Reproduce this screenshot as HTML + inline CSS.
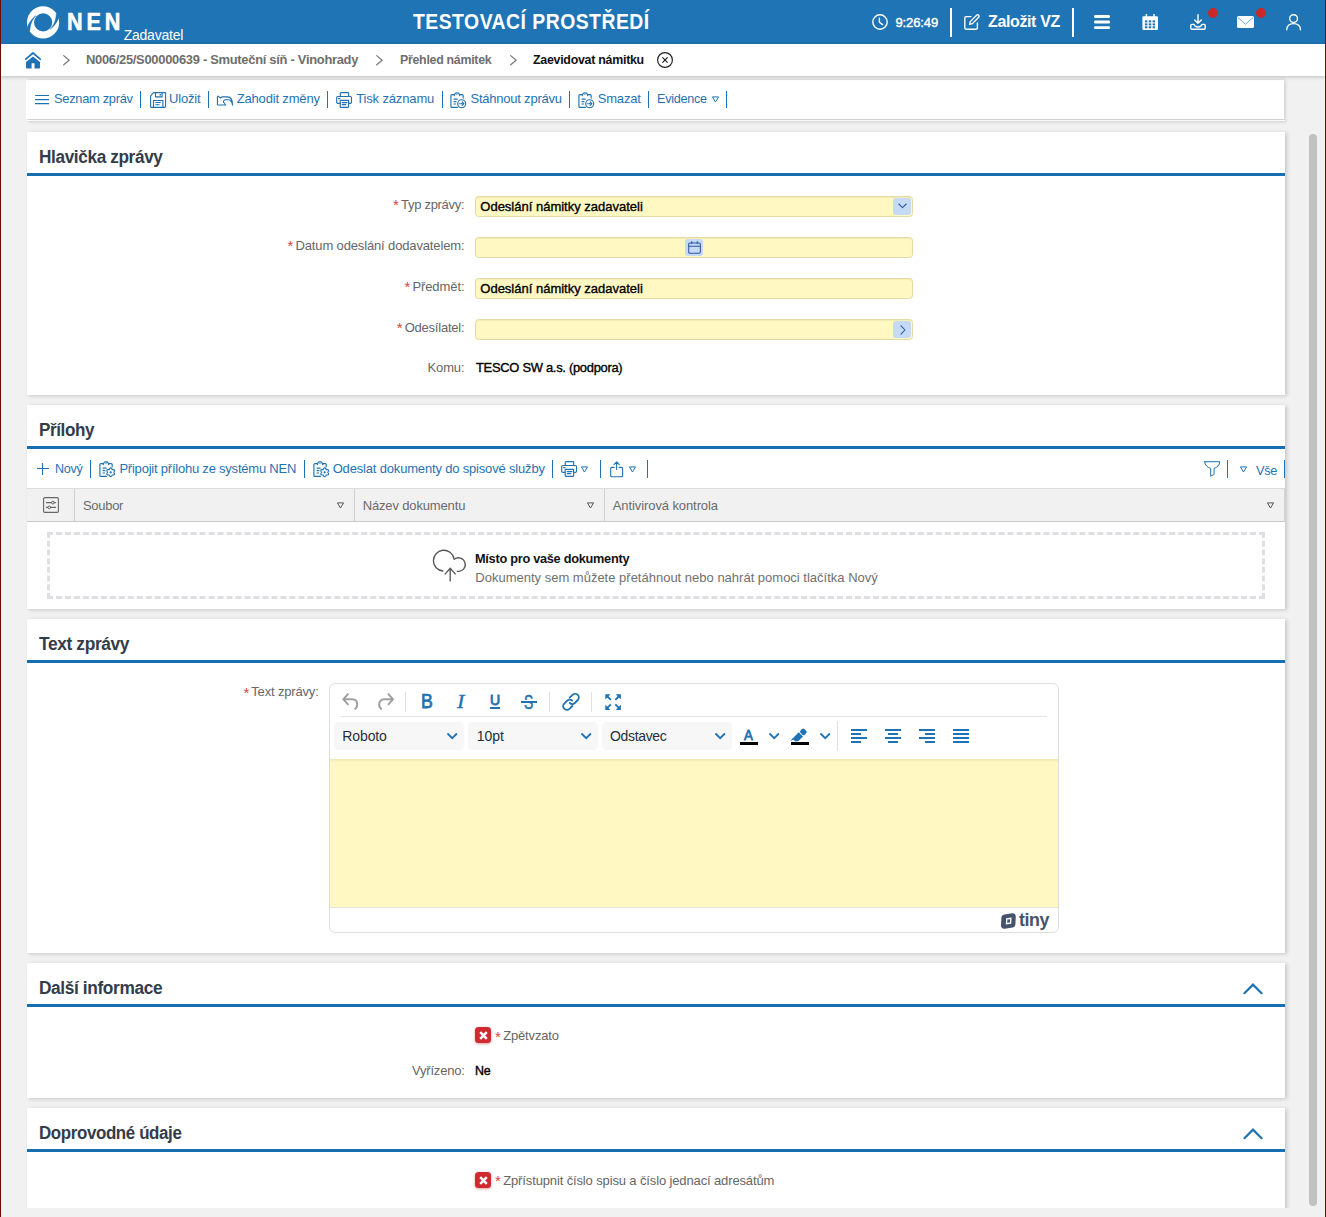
<!DOCTYPE html>
<html lang="cs">
<head>
<meta charset="utf-8">
<title>NEN – Zaevidovat námitku</title>
<style>
*{box-sizing:border-box;margin:0;padding:0}
html,body{width:1326px;height:1217px;overflow:hidden;background:#fff}
body{font-family:"Liberation Sans",sans-serif;font-size:13px;color:#666;position:relative}
#app{position:absolute;left:0;top:0;width:1326px;height:1217px;overflow:hidden;background:#fff}
.frame{position:absolute;top:0;width:1px;height:1217px;background:#6a0d02;z-index:50}
.t{position:absolute;white-space:pre;display:block;font-weight:400}
h1.t,h2.t{font-weight:700}
.abs,svg.i{position:absolute;display:block}
svg.i{overflow:visible}
header{position:absolute;left:1px;top:0;width:1324px;height:44px;background:#1e74b5}
nav.crumbs{position:absolute;left:1px;top:44px;width:1324px;height:32px;background:#fff;box-shadow:0 1px 4px rgba(0,0,0,.22);z-index:3}
main{position:absolute;left:1px;top:76px;width:1324px;height:1141px;background:#f1f1f1;overflow:hidden}
.view{position:absolute;left:1px;top:0;width:1322px;height:1132px;overflow:hidden}
.bar{position:absolute;background:#fff}
.panel{position:absolute;left:25px;width:1258px;background:#fff;box-shadow:1.5px 1px 4px rgba(0,0,0,.18)}
.panel .rule{position:absolute;left:0;top:41px;width:1258px;height:3px;background:#176eb0}
.sep{position:absolute;width:1.4px;background:#1f72b3}
.hsep{position:absolute;width:2px;background:#fff;top:8px;height:29px}
.dot{position:absolute;width:10px;height:10px;border-radius:50%;background:#c9282d}
.fld{position:absolute;left:448px;width:438px;height:21px;background:#fff8c3;border:1px solid #e2daa6;border-radius:3.5px;box-shadow:inset 0 1px 1px rgba(160,140,40,.10)}
.btn{position:absolute;width:18px;height:17px;border-radius:3px;background:#c4daf5}
.thead{position:absolute;left:0;top:83px;width:1258px;height:34px;background:#f1f1f1;border-top:1px solid #dcdcdc;border-bottom:1px solid #c9c9c9;border-right:1px solid #d4d4d4}
.thead i{position:absolute;top:0;width:1px;height:32px;background:#d0d0d0}
.drop{position:absolute;left:20px;top:127px;width:1218px;height:67px;border:3px dashed #dddfe2}
.ed{position:absolute;left:302px;top:64px;width:730px;height:250px;border:1px solid #dedede;border-radius:6px;background:#fff;overflow:hidden}
.ed .area{position:absolute;left:0;top:75px;width:728px;height:148px;background:#fff8c3;box-shadow:inset 0 3px 3px -2px rgba(120,110,60,.18)}
.ed .hr{position:absolute;left:11px;top:32px;width:706px;height:1px;background:#e3e3e3}
.ed .st{position:absolute;left:0;top:223px;width:728px;height:1px;background:#e3e3e3}
.sel{position:absolute;top:38px;width:130px;height:28px;border-radius:4px;background:#f7f7f7}
.vs{position:absolute;width:1px;background:#e0e0e0}
.chk{position:absolute;width:16px;height:16px;border-radius:3.5px;background:#cf2a30;box-shadow:0 1px 3px rgba(200,40,40,.45)}
.thumb{position:absolute;left:1308px;top:58px;width:8px;height:1072px;border-radius:4px;background:#c1c1c1}
</style>
</head>
<body>
<div id="app">
<div class="frame" style="left:0"></div><div class="frame" style="left:1325px"></div>
<header>
<svg class="i" style="left:26.00px;top:5.50px" width="33" height="33" viewBox="0 0 33 33" ><circle cx="16.05" cy="16.4" r="16.1" fill="#fff"/><circle cx="16.15" cy="16.4" r="9.1" fill="#1e74b5"/><path d="M0.24 21.4C1.6 17.6 4.2 13.2 8.7 9.7L8.4 10.4C5.6 13 3.2 18 2.8 24.9L-0.5 26Z" fill="#1e74b5" stroke="#1e74b5" stroke-width=".5"/><path d="M0.24 21.4C1.6 17.6 4.2 13.2 8.7 9.7L8.4 10.4C5.6 13 3.2 18 2.8 24.9L-0.5 26Z" fill="#1e74b5" stroke="#1e74b5" stroke-width=".5" transform="rotate(180 16.05 16.4)"/></svg>
<strong class="t" style="left:66.30px;top:6.38px;font-size:24px;line-height:31px;font-weight:700;letter-spacing:4.301px;color:#fff;-webkit-text-stroke:0.6px;transform:scaleX(0.9000);transform-origin:0 0;">NEN</strong>
<span class="t" style="left:122.70px;top:26.45px;font-size:14px;line-height:18px;letter-spacing:-0.232px;color:#fff;">Zadavatel</span>
<h1 class="t" style="left:411.80px;top:7.55px;font-size:21.5px;line-height:28px;font-weight:700;letter-spacing:0.552px;color:#fff;transform:scaleX(0.9000);transform-origin:0 0;">TESTOVACÍ PROSTŘEDÍ</h1>
<svg class="i" style="left:870.80px;top:14.00px" width="16" height="16" viewBox="0 0 16 16" ><circle cx="8" cy="8" r="7.2" fill="none" stroke="#fff" stroke-width="1.4" stroke-linecap="round" stroke-linejoin="round"/><path d="M7.4 4.2V8.2L10.6 10.6" fill="none" stroke="#fff" stroke-width="1.4" stroke-linecap="round" stroke-linejoin="round"/></svg>
<span class="t" style="left:894.50px;top:14.00px;font-size:13px;line-height:17px;letter-spacing:-0.127px;color:#fff;-webkit-text-stroke:0.4px;">9:26:49</span>
<div class="hsep" style="left:949px"></div>
<svg class="i" style="left:963.00px;top:14.00px" width="16.5" height="16" viewBox="0 0 16.5 16" ><path d="M7 2.6H2.2A1.4 1.4 0 0 0 .8 4V13.8A1.4 1.4 0 0 0 2.2 15.2H12A1.4 1.4 0 0 0 13.4 13.8V9" fill="none" stroke="#fff" stroke-width="1.4" stroke-linecap="round" stroke-linejoin="round"/><path d="M12.6 1.2a1.45 1.45 0 0 1 2.1 2.1L8.3 9.7 5.6 10.4 6.3 7.6Z" fill="none" stroke="#fff" stroke-width="1.3" stroke-linecap="round" stroke-linejoin="round"/></svg>
<strong class="t" style="left:987.10px;top:11.26px;font-size:16px;line-height:21px;font-weight:700;letter-spacing:-0.352px;color:#fff;transform:scaleX(0.9975);transform-origin:0 0;">Založit VZ</strong>
<div class="hsep" style="left:1071px"></div>
<svg class="i" style="left:1093.00px;top:15.00px" width="16" height="14.2" viewBox="0 0 16 14.2" ><rect x="0" y="0.1" width="16" height="2.8" rx="1.2" fill="#fff"/><rect x="0" y="5.6" width="16" height="2.8" rx="1.2" fill="#fff"/><rect x="0" y="11.2" width="16" height="2.8" rx="1.2" fill="#fff"/></svg>
<svg class="i" style="left:1140.70px;top:14.00px" width="16.4" height="16" viewBox="0 0 16.4 16" ><path d="M1.6 2.2H14.8A1.2 1.2 0 0 1 16 3.4V14.8A1.2 1.2 0 0 1 14.8 16H1.6A1.2 1.2 0 0 1 .4 14.8V3.4A1.2 1.2 0 0 1 1.6 2.2Z" fill="#fff"/><rect x="3.6" y="0" width="1.5" height="3.6" rx=".5" fill="#fff"/><rect x="11.3" y="0" width="1.5" height="3.6" rx=".5" fill="#fff"/><rect x="4.4" y="1.6" width="1" height="2.4" fill="#1e74b5" opacity=".0"/><g fill="#1e74b5"><rect x="2.9" y="6.4" width="2.5" height="2" /><rect x="6.75" y="6.4" width="2.5" height="2" /><rect x="10.6" y="6.4" width="2.5" height="2" /><rect x="2.9" y="9.4" width="2.5" height="2" /><rect x="6.75" y="9.4" width="2.5" height="2" /><rect x="10.6" y="9.4" width="2.5" height="2" /><rect x="2.9" y="12.3" width="2.5" height="2" /><rect x="6.75" y="12.3" width="2.5" height="2" /><rect x="10.6" y="12.3" width="2.5" height="2" /></g></svg>
<svg class="i" style="left:1188.80px;top:14.00px" width="16" height="16" viewBox="0 0 16 16" ><path d="M8 .7V9M4.7 5.9 8 9.2 11.3 5.9" fill="none" stroke="#fff" stroke-width="1.4" stroke-linecap="round" stroke-linejoin="round"/><path d="M4 10.4H2A1.2 1.2 0 0 0 .8 11.6V14A1.2 1.2 0 0 0 2 15.2H14A1.2 1.2 0 0 0 15.2 14V11.6A1.2 1.2 0 0 0 14 10.4H12C11.6 12 10 13 8 13S4.4 12 4 10.4Z" fill="none" stroke="#fff" stroke-width="1.4" stroke-linecap="round" stroke-linejoin="round"/></svg>
<div class="dot" style="left:1207px;top:8px"></div>
<svg class="i" style="left:1236.00px;top:16.00px" width="17" height="12" viewBox="0 0 17 12" ><rect x="0" y="0" width="17" height="12" rx="1.6" fill="#fff"/><path d="M1 1.6 8.5 8.2 16 1.6" fill="none" stroke="#5b9bd0" stroke-width="0.9"/></svg>
<div class="dot" style="left:1255px;top:8px"></div>
<svg class="i" style="left:1285.00px;top:14.00px" width="15.2" height="16" viewBox="0 0 15.2 16" ><circle cx="7.6" cy="4.6" r="3.9" fill="none" stroke="#fff" stroke-width="1.4" stroke-linecap="round" stroke-linejoin="round"/><path d="M.7 15.8C.9 11.6 3.8 9.6 7.6 9.6S14.3 11.6 14.5 15.8" fill="none" stroke="#fff" stroke-width="1.4" stroke-linecap="round" stroke-linejoin="round"/></svg>
</header>
<nav class="crumbs">
<svg class="i" style="left:23.90px;top:7.60px" width="16.4" height="16.6" viewBox="0 0 16.4 16.6" ><path d="M.8 7.2 8 1 15.2 7.2" fill="none" stroke="#1f72b3" stroke-width="1.7" stroke-linecap="round" stroke-linejoin="round"/><path d="M1 9.9 8 4.4 15 9.9V15.4A1 1 0 0 1 14 16.4H9.5V11.3H6.6V16.4H2A1 1 0 0 1 1 15.4Z" fill="#1f72b3"/></svg>
<svg class="i" style="left:61.90px;top:11.40px" width="7" height="10.4" viewBox="0 0 7 10.4" ><path d="M.7 .6 6.2 5.2 .7 9.8" fill="none" stroke="#777" stroke-width="1.2" stroke-linecap="round" stroke-linejoin="round"/></svg>
<span class="t" style="left:85.20px;top:7.40px;font-size:13px;line-height:17px;font-weight:700;letter-spacing:-0.286px;color:#6e6e6e;transform:scaleX(0.9930);transform-origin:0 0;">N006/25/S00000639 - Smuteční síň - Vinohrady</span>
<svg class="i" style="left:375.00px;top:11.40px" width="7" height="10.4" viewBox="0 0 7 10.4" ><path d="M.7 .6 6.2 5.2 .7 9.8" fill="none" stroke="#777" stroke-width="1.2" stroke-linecap="round" stroke-linejoin="round"/></svg>
<span class="t" style="left:398.70px;top:7.40px;font-size:13px;line-height:17px;font-weight:700;letter-spacing:-0.286px;color:#6e6e6e;transform:scaleX(0.9504);transform-origin:0 0;">Přehled námitek</span>
<svg class="i" style="left:508.80px;top:11.40px" width="7" height="10.4" viewBox="0 0 7 10.4" ><path d="M.7 .6 6.2 5.2 .7 9.8" fill="none" stroke="#777" stroke-width="1.2" stroke-linecap="round" stroke-linejoin="round"/></svg>
<span class="t" style="left:531.50px;top:7.40px;font-size:13px;line-height:17px;font-weight:700;letter-spacing:-0.286px;color:#111;transform:scaleX(0.9545);transform-origin:0 0;">Zaevidovat námitku</span>
<svg class="i" style="left:655.60px;top:8.00px" width="16" height="16" viewBox="0 0 16 16" ><circle cx="8" cy="8" r="7.4" fill="none" stroke="#222" stroke-width="1.15" stroke-linecap="round" stroke-linejoin="round"/><path d="M5.7 5.7 10.3 10.3M10.3 5.7 5.7 10.3" fill="none" stroke="#222" stroke-width="1.15" stroke-linecap="round" stroke-linejoin="round"/></svg>
</nav>
<main>
<div class="view">
<div class="bar" style="left:25px;top:43px;width:1258px;height:2px;border-top:1px solid #dedede;box-shadow:1.5px 1px 3px rgba(0,0,0,.17)"></div>
<div class="bar" style="left:24px;top:4px;width:1258px;height:39px;box-shadow:1.5px 0 3px rgba(0,0,0,.15)">
<svg class="i" style="left:9.00px;top:15.00px" width="14.2" height="9.2" viewBox="0 0 14.2 9.2" ><rect x="0" y="0" width="14.2" height="1.1" rx=".5" fill="#1f72b3"/><rect x="0" y="4.05" width="14.2" height="1.1" rx=".5" fill="#1f72b3"/><rect x="0" y="8.1" width="14.2" height="1.1" rx=".5" fill="#1f72b3"/></svg>
<span class="t" style="left:27.70px;top:10.20px;font-size:13px;line-height:17px;letter-spacing:-0.286px;color:#1f72b3;transform:scaleX(0.9881);transform-origin:0 0;">Seznam zpráv</span>
<div class="sep" style="left:113.8px;top:10.7px;height:17.6px"></div>
<svg class="i" style="left:123.60px;top:12.20px" width="16.2" height="16" viewBox="0 0 16.2 16" ><path d="M3.6 .6H14.8A.8 .8 0 0 1 15.6 1.4V14.6A.8 .8 0 0 1 14.8 15.4H1.4A.8 .8 0 0 1 .6 14.6V3.8Z" fill="none" stroke="#1f72b3" stroke-width="1.1" stroke-linecap="round" stroke-linejoin="round"/><path d="M5.5 .8V4.9H12.1V.8" fill="none" stroke="#1f72b3" stroke-width="1.1" stroke-linecap="round" stroke-linejoin="round"/><path d="M3.5 15.2V8.5H12.9V15.2" fill="none" stroke="#1f72b3" stroke-width="1.1" stroke-linecap="round" stroke-linejoin="round"/><path d="M5.4 10.5H10.8M5.4 12.7H9.6" fill="none" stroke="#1f72b3" stroke-width="1.0" stroke-linecap="butt" stroke-linejoin="round"/><rect x="9.6" y="2" width="1.3" height="1.6" fill="#1f72b3"/></svg>
<span class="t" style="left:143.10px;top:10.20px;font-size:13px;line-height:17px;letter-spacing:-0.209px;color:#1f72b3;">Uložit</span>
<div class="sep" style="left:181.7px;top:10.7px;height:17.6px"></div>
<svg class="i" style="left:191.00px;top:14.50px" width="16.4" height="11" viewBox="0 0 16.4 11" ><path d="M1.3 1.3 3.4 3C4 2.4 4.6 1.9 5.4 1.9H10.6C13.6 1.9 15.6 5 15.6 10.2C15 7 13.6 4.7 11 4.7H8.4C7.4 4.7 6.4 6 6.4 7L8.7 10H.9C.6 10 .4 9.8 .4 9.5V1.8C.4 1.3 .9 1 1.3 1.3Z" fill="none" stroke="#1f72b3" stroke-width="1.1" stroke-linecap="round" stroke-linejoin="round"/></svg>
<span class="t" style="left:210.70px;top:10.20px;font-size:13px;line-height:17px;letter-spacing:-0.164px;color:#1f72b3;">Zahodit změny</span>
<div class="sep" style="left:300.9px;top:10.7px;height:17.6px"></div>
<svg class="i" style="left:310.20px;top:11.90px" width="16.2" height="16" viewBox="0 0 16.2 16" ><path d="M4.3 4.4V1.3A.7 .7 0 0 1 5 .6H12A.7 .7 0 0 1 12.7 1.3V4.4" fill="none" stroke="#1f72b3" stroke-width="1.15" stroke-linecap="round" stroke-linejoin="round"/><path d="M4 11.4H1.8A1.1 1.1 0 0 1 .7 10.3V5.6A1.1 1.1 0 0 1 1.8 4.5H14.4A1.1 1.1 0 0 1 15.5 5.6V10.3A1.1 1.1 0 0 1 14.4 11.4H12.8" fill="none" stroke="#1f72b3" stroke-width="1.15" stroke-linecap="round" stroke-linejoin="round"/><path d="M4.2 8.4H12.6V14.8A.6 .6 0 0 1 12 15.4H4.8A.6 .6 0 0 1 4.2 14.8Z" fill="none" stroke="#1f72b3" stroke-width="1.15" stroke-linecap="round" stroke-linejoin="round"/><path d="M6.2 10.6H11M6.2 12.6H9.8" fill="none" stroke="#1f72b3" stroke-width="1.1" stroke-linecap="round" stroke-linejoin="round"/><path d="M2.6 6.6H4" fill="none" stroke="#1f72b3" stroke-width="1.1" stroke-linecap="round" stroke-linejoin="round"/></svg>
<span class="t" style="left:330.20px;top:10.20px;font-size:13px;line-height:17px;letter-spacing:-0.146px;color:#1f72b3;">Tisk záznamu</span>
<div class="sep" style="left:415.8px;top:10.7px;height:17.6px"></div>
<svg class="i" style="left:424.10px;top:12.00px" width="16.4" height="16.2" viewBox="0 0 16.4 16.2" ><path d="M4.2 2.6H1.9A1 1 0 0 0 .9 3.6V14.4A1 1 0 0 0 1.9 15.4H7.4" fill="none" stroke="#1f72b3" stroke-width="1.15" stroke-linecap="round" stroke-linejoin="round"/><path d="M9.8 2.6H12.2A1 1 0 0 1 13.2 3.6V6" fill="none" stroke="#1f72b3" stroke-width="1.15" stroke-linecap="round" stroke-linejoin="round"/><path d="M4.3 3.6 5 1.6C5.4 .6 8.6 .6 9 1.6L9.7 3.6" fill="none" stroke="#1f72b3" stroke-width="1.15" stroke-linecap="round" stroke-linejoin="round"/><circle cx="7" cy="2.6" r=".6" fill="#1f72b3"/><path d="M3.6 7.2H7.6M3.6 9.6H6.4M3.6 12H6" fill="none" stroke="#1f72b3" stroke-width="1.15" stroke-linecap="butt" stroke-linejoin="round"/><circle cx="11.7" cy="11.7" r="4" fill="none" stroke="#1f72b3" stroke-width="1.1" stroke-linecap="round" stroke-linejoin="round"/><path d="M9.4 11.7H13.6M12.2 10 13.9 11.7 12.2 13.4" fill="none" stroke="#1f72b3" stroke-width="1.1" stroke-linecap="round" stroke-linejoin="round"/></svg>
<span class="t" style="left:444.50px;top:10.20px;font-size:13px;line-height:17px;letter-spacing:-0.227px;color:#1f72b3;">Stáhnout zprávu</span>
<div class="sep" style="left:542.9px;top:10.7px;height:17.6px"></div>
<svg class="i" style="left:551.70px;top:12.00px" width="16.4" height="16.2" viewBox="0 0 16.4 16.2" ><path d="M4.2 2.6H1.9A1 1 0 0 0 .9 3.6V14.4A1 1 0 0 0 1.9 15.4H7.4" fill="none" stroke="#1f72b3" stroke-width="1.15" stroke-linecap="round" stroke-linejoin="round"/><path d="M9.8 2.6H12.2A1 1 0 0 1 13.2 3.6V6" fill="none" stroke="#1f72b3" stroke-width="1.15" stroke-linecap="round" stroke-linejoin="round"/><path d="M4.3 3.6 5 1.6C5.4 .6 8.6 .6 9 1.6L9.7 3.6" fill="none" stroke="#1f72b3" stroke-width="1.15" stroke-linecap="round" stroke-linejoin="round"/><circle cx="7" cy="2.6" r=".6" fill="#1f72b3"/><path d="M3.6 7.2H7.6M3.6 9.6H6.4M3.6 12H6" fill="none" stroke="#1f72b3" stroke-width="1.15" stroke-linecap="butt" stroke-linejoin="round"/><circle cx="11.7" cy="11.7" r="4" fill="none" stroke="#1f72b3" stroke-width="1.1" stroke-linecap="round" stroke-linejoin="round"/><path d="M9.4 11.7H13.6M12.2 10 13.9 11.7 12.2 13.4" fill="none" stroke="#1f72b3" stroke-width="1.1" stroke-linecap="round" stroke-linejoin="round"/></svg>
<span class="t" style="left:571.70px;top:10.20px;font-size:13px;line-height:17px;letter-spacing:-0.161px;color:#1f72b3;">Smazat</span>
<div class="sep" style="left:621.9px;top:10.7px;height:17.6px"></div>
<span class="t" style="left:631.30px;top:10.20px;font-size:13px;line-height:17px;letter-spacing:-0.286px;color:#1f72b3;transform:scaleX(0.9715);transform-origin:0 0;">Evidence</span>
<svg class="i" style="left:685.90px;top:15.80px" width="7.4" height="7" viewBox="0 0 7.4 7" ><path d="M.8 .9H6.6L3.7 5.7Z" fill="none" stroke="#1f72b3" stroke-width="1.0" stroke-linecap="round" stroke-linejoin="miter"/></svg>
<div class="sep" style="left:699.8px;top:10.7px;height:17.6px"></div>
</div>
<section class="panel" style="top:56px;height:263px">
<h2 class="t" style="left:12.30px;top:13.86px;font-size:18px;line-height:23px;font-weight:700;letter-spacing:-0.396px;color:#343c4a;transform:scaleX(0.9565);transform-origin:0 0;">Hlavička zprávy</h2>
<div class="rule"></div>
<span class="t" style="left:366.00px;top:63.00px;font-size:15px;line-height:20px;color:#d2453e;">*</span>
<label class="t" style="left:374.00px;top:63.60px;font-size:13px;line-height:17px;letter-spacing:-0.286px;color:#666666;">Typ zprávy:</label>
<div class="fld" style="top:64px"><div class="btn" style="left:417px;top:1px"></div><svg class="i" style="left:421.50px;top:6.10px" width="9" height="6" viewBox="0 0 9 6" ><path d="M.8 1 4.5 4.6 8.2 1" fill="none" stroke="#2f55a4" stroke-width="1.05" stroke-linecap="round" stroke-linejoin="round"/></svg></div>
<span class="t" style="left:453.30px;top:65.50px;font-size:13px;line-height:17px;color:#000;-webkit-text-stroke:0.35px;">Odeslání námitky zadavateli</span>
<span class="t" style="left:260.50px;top:104.00px;font-size:15px;line-height:20px;color:#d2453e;">*</span>
<label class="t" style="left:268.50px;top:104.60px;font-size:13px;line-height:17px;letter-spacing:-0.140px;color:#666666;">Datum odeslání dodavatelem:</label>
<div class="fld" style="top:105px"><div class="btn" style="left:209px;top:1px"></div><svg class="i" style="left:212.00px;top:3.00px" width="13" height="13" viewBox="0 0 13 13" ><rect x=".7" y="1.9" width="11.6" height="10.4" rx="1.2" fill="none" stroke="#2f55a4" stroke-width="1.05" stroke-linecap="round" stroke-linejoin="round"/><path d="M.9 5.2H12.1M3.8 .6V2.6M9.2 .6V2.6" fill="none" stroke="#2f55a4" stroke-width="1.05" stroke-linecap="round" stroke-linejoin="round"/></svg></div>
<span class="t" style="left:377.40px;top:145.00px;font-size:15px;line-height:20px;color:#d2453e;">*</span>
<label class="t" style="left:385.40px;top:145.60px;font-size:13px;line-height:17px;letter-spacing:-0.083px;color:#666666;">Předmět:</label>
<div class="fld" style="top:146px"></div>
<span class="t" style="left:453.30px;top:147.50px;font-size:13px;line-height:17px;color:#000;-webkit-text-stroke:0.35px;">Odeslání námitky zadavateli</span>
<span class="t" style="left:369.70px;top:186.00px;font-size:15px;line-height:20px;color:#d2453e;">*</span>
<label class="t" style="left:377.70px;top:186.60px;font-size:13px;line-height:17px;letter-spacing:-0.228px;color:#666666;">Odesílatel:</label>
<div class="fld" style="top:187px"><div class="btn" style="left:417px;top:1px"></div><svg class="i" style="left:423.50px;top:4.50px" width="6" height="10" viewBox="0 0 6 10" ><path d="M1 .8 5 5 1 9.2" fill="none" stroke="#2f55a4" stroke-width="1.05" stroke-linecap="round" stroke-linejoin="round"/></svg></div>
<label class="t" style="left:400.50px;top:226.60px;font-size:13px;line-height:17px;letter-spacing:-0.127px;color:#666666;">Komu:</label>
<span class="t" style="left:448.70px;top:226.60px;font-size:13px;line-height:17px;letter-spacing:-0.286px;color:#000;-webkit-text-stroke:0.35px;transform:scaleX(0.9937);transform-origin:0 0;">TESCO SW a.s. (podpora)</span>
</section>
<section class="panel" style="top:329px;height:204px">
<h2 class="t" style="left:12.30px;top:13.86px;font-size:18px;line-height:23px;font-weight:700;letter-spacing:-0.396px;color:#343c4a;transform:scaleX(0.9468);transform-origin:0 0;">Přílohy</h2>
<div class="rule"></div>
<svg class="i" style="left:10.00px;top:58.00px" width="12" height="12" viewBox="0 0 12 12" ><path d="M5.5 0V12M0 5.5H12" fill="none" stroke="#1f72b3" stroke-width="1.1" stroke-linecap="butt" stroke-linejoin="round"/></svg>
<span class="t" style="left:28.30px;top:55.00px;font-size:13px;line-height:17px;letter-spacing:-0.286px;color:#1f72b3;transform:scaleX(0.9699);transform-origin:0 0;">Nový</span>
<div class="sep" style="left:62.8px;top:55.4px;height:17.4px"></div>
<svg class="i" style="left:72.20px;top:55.60px" width="16.8" height="16.8" viewBox="0 0 16.8 16.8" ><path d="M4.2 2.6H1.9A1 1 0 0 0 .9 3.6V14.4A1 1 0 0 0 1.9 15.4H7.4" fill="none" stroke="#1f72b3" stroke-width="1.15" stroke-linecap="round" stroke-linejoin="round"/><path d="M9.8 2.6H12.2A1 1 0 0 1 13.2 3.6V6" fill="none" stroke="#1f72b3" stroke-width="1.15" stroke-linecap="round" stroke-linejoin="round"/><path d="M4.3 3.6 5 1.6C5.4 .6 8.6 .6 9 1.6L9.7 3.6" fill="none" stroke="#1f72b3" stroke-width="1.15" stroke-linecap="round" stroke-linejoin="round"/><circle cx="7" cy="2.6" r=".6" fill="#1f72b3"/><path d="M3.6 7.2H7.6M3.6 9.6H6.4M3.6 12H6" fill="none" stroke="#1f72b3" stroke-width="1.15" stroke-linecap="butt" stroke-linejoin="round"/><path d="M11.70 6.80L12.71 7.53L13.20 8.70L14.46 8.54L15.60 9.05L15.47 10.29L14.70 11.30L15.47 12.31L15.60 13.55L14.46 14.06L13.20 13.90L12.71 15.07L11.70 15.80L10.69 15.07L10.20 13.90L8.94 14.06L7.80 13.55L7.93 12.31L8.70 11.30L7.93 10.29L7.80 9.05L8.94 8.54L10.20 8.70L10.69 7.53Z" fill="#fff" stroke="#1f72b3" stroke-width="1.05" stroke-linejoin="round"/><circle cx="11.7" cy="11.3" r="1.15" fill="#1f72b3"/></svg>
<span class="t" style="left:92.40px;top:55.00px;font-size:13px;line-height:17px;letter-spacing:-0.220px;color:#1f72b3;">Připojit přílohu ze systému NEN</span>
<div class="sep" style="left:276.8px;top:55.4px;height:17.4px"></div>
<svg class="i" style="left:285.80px;top:55.60px" width="16.8" height="16.8" viewBox="0 0 16.8 16.8" ><path d="M4.2 2.6H1.9A1 1 0 0 0 .9 3.6V14.4A1 1 0 0 0 1.9 15.4H7.4" fill="none" stroke="#1f72b3" stroke-width="1.15" stroke-linecap="round" stroke-linejoin="round"/><path d="M9.8 2.6H12.2A1 1 0 0 1 13.2 3.6V6" fill="none" stroke="#1f72b3" stroke-width="1.15" stroke-linecap="round" stroke-linejoin="round"/><path d="M4.3 3.6 5 1.6C5.4 .6 8.6 .6 9 1.6L9.7 3.6" fill="none" stroke="#1f72b3" stroke-width="1.15" stroke-linecap="round" stroke-linejoin="round"/><circle cx="7" cy="2.6" r=".6" fill="#1f72b3"/><path d="M3.6 7.2H7.6M3.6 9.6H6.4M3.6 12H6" fill="none" stroke="#1f72b3" stroke-width="1.15" stroke-linecap="butt" stroke-linejoin="round"/><path d="M11.70 6.80L12.71 7.53L13.20 8.70L14.46 8.54L15.60 9.05L15.47 10.29L14.70 11.30L15.47 12.31L15.60 13.55L14.46 14.06L13.20 13.90L12.71 15.07L11.70 15.80L10.69 15.07L10.20 13.90L8.94 14.06L7.80 13.55L7.93 12.31L8.70 11.30L7.93 10.29L7.80 9.05L8.94 8.54L10.20 8.70L10.69 7.53Z" fill="#fff" stroke="#1f72b3" stroke-width="1.05" stroke-linejoin="round"/><circle cx="11.7" cy="11.3" r="1.15" fill="#1f72b3"/></svg>
<span class="t" style="left:305.70px;top:55.00px;font-size:13px;line-height:17px;letter-spacing:-0.175px;color:#1f72b3;">Odeslat dokumenty do spisové služby</span>
<div class="sep" style="left:524.8px;top:55.4px;height:17.4px"></div>
<svg class="i" style="left:533.80px;top:56.10px" width="16.2" height="16" viewBox="0 0 16.2 16" ><path d="M4.3 4.4V1.3A.7 .7 0 0 1 5 .6H12A.7 .7 0 0 1 12.7 1.3V4.4" fill="none" stroke="#1f72b3" stroke-width="1.15" stroke-linecap="round" stroke-linejoin="round"/><path d="M4 11.4H1.8A1.1 1.1 0 0 1 .7 10.3V5.6A1.1 1.1 0 0 1 1.8 4.5H14.4A1.1 1.1 0 0 1 15.5 5.6V10.3A1.1 1.1 0 0 1 14.4 11.4H12.8" fill="none" stroke="#1f72b3" stroke-width="1.15" stroke-linecap="round" stroke-linejoin="round"/><path d="M4.2 8.4H12.6V14.8A.6 .6 0 0 1 12 15.4H4.8A.6 .6 0 0 1 4.2 14.8Z" fill="none" stroke="#1f72b3" stroke-width="1.15" stroke-linecap="round" stroke-linejoin="round"/><path d="M6.2 10.6H11M6.2 12.6H9.8" fill="none" stroke="#1f72b3" stroke-width="1.1" stroke-linecap="round" stroke-linejoin="round"/><path d="M2.6 6.6H4" fill="none" stroke="#1f72b3" stroke-width="1.1" stroke-linecap="round" stroke-linejoin="round"/></svg>
<svg class="i" style="left:554.10px;top:60.60px" width="7.4" height="7" viewBox="0 0 7.4 7" ><path d="M.8 .9H6.6L3.7 5.7Z" fill="none" stroke="#1f72b3" stroke-width="1.0" stroke-linecap="round" stroke-linejoin="miter"/></svg>
<div class="sep" style="left:572.7px;top:55.4px;height:17.4px"></div>
<svg class="i" style="left:583.40px;top:55.50px" width="13.4" height="17" viewBox="0 0 13.4 17" ><path d="M4.2 6.4H1.7A1 1 0 0 0 .7 7.4V14.8A1 1 0 0 0 1.7 15.8H11.6A1 1 0 0 0 12.6 14.8V7.4A1 1 0 0 0 11.6 6.4H9.2" fill="none" stroke="#1f72b3" stroke-width="1.1" stroke-linecap="round" stroke-linejoin="round"/><path d="M6.65 8.4V1M4 3.6 6.65 .9 9.3 3.6" fill="none" stroke="#1f72b3" stroke-width="1.1" stroke-linecap="round" stroke-linejoin="round"/></svg>
<svg class="i" style="left:602.00px;top:60.60px" width="7.4" height="7" viewBox="0 0 7.4 7" ><path d="M.8 .9H6.6L3.7 5.7Z" fill="none" stroke="#1f72b3" stroke-width="1.0" stroke-linecap="round" stroke-linejoin="miter"/></svg>
<div class="sep" style="left:620.0px;top:55.4px;height:17.4px"></div>
<svg class="i" style="left:1176.80px;top:56.00px" width="16.4" height="16" viewBox="0 0 16.4 16" ><path d="M.7 .7H15.7C15.7 4.2 13 6.5 10.1 7.4V13.4L6.7 15.2V7.4C3.6 6.5 .7 4.2 .7 .7Z" fill="none" stroke="#1f72b3" stroke-width="1.0" stroke-linecap="round" stroke-linejoin="round"/></svg>
<div class="sep" style="left:1199.8px;top:55.4px;height:17.4px"></div>
<svg class="i" style="left:1213.20px;top:60.60px" width="7.4" height="7" viewBox="0 0 7.4 7" ><path d="M.8 .9H6.6L3.7 5.7Z" fill="none" stroke="#1f72b3" stroke-width="1.0" stroke-linecap="round" stroke-linejoin="miter"/></svg>
<span class="t" style="left:1228.70px;top:57.00px;font-size:13px;line-height:17px;letter-spacing:-0.286px;color:#1f72b3;transform:scaleX(0.9808);transform-origin:0 0;">Vše</span>
<div class="sep" style="left:1256.6px;top:55.4px;height:17.4px"></div>
<div class="thead">
<i style="left:47px"></i><i style="left:327px"></i><i style="left:577px"></i>
<svg class="i" style="left:16.20px;top:7.90px" width="16" height="16" viewBox="0 0 16 16" ><rect x=".6" y=".6" width="14.8" height="14.8" rx="1.1" fill="none" stroke="#676767" stroke-width="1.1" stroke-linecap="round" stroke-linejoin="round"/><path d="M3.4 5.6H8.4M11.4 5.6H12.6M3.4 10.4H4.8M7.8 10.4H12.6" fill="none" stroke="#676767" stroke-width="1.1" stroke-linecap="round" stroke-linejoin="round"/><circle cx="9.9" cy="5.6" r="1.4" fill="none" stroke="#676767" stroke-width="1.0" stroke-linecap="round" stroke-linejoin="round"/><circle cx="6.3" cy="10.4" r="1.4" fill="none" stroke="#676767" stroke-width="1.0" stroke-linecap="round" stroke-linejoin="round"/></svg>
<svg class="i" style="left:310.30px;top:13.00px" width="7.4" height="7" viewBox="0 0 7.4 7" ><path d="M.8 .9H6.6L3.7 5.7Z" fill="none" stroke="#555" stroke-width="1.0" stroke-linecap="round" stroke-linejoin="miter"/></svg>
<svg class="i" style="left:560.20px;top:13.00px" width="7.4" height="7" viewBox="0 0 7.4 7" ><path d="M.8 .9H6.6L3.7 5.7Z" fill="none" stroke="#555" stroke-width="1.0" stroke-linecap="round" stroke-linejoin="miter"/></svg>
<svg class="i" style="left:1239.80px;top:13.00px" width="7.4" height="7" viewBox="0 0 7.4 7" ><path d="M.8 .9H6.6L3.7 5.7Z" fill="none" stroke="#555" stroke-width="1.0" stroke-linecap="round" stroke-linejoin="miter"/></svg>
</div>
<span class="t" style="left:55.90px;top:92.30px;font-size:13px;line-height:17px;letter-spacing:-0.286px;color:#6b6b6b;transform:scaleX(0.9971);transform-origin:0 0;">Soubor</span>
<span class="t" style="left:335.70px;top:92.30px;font-size:13px;line-height:17px;letter-spacing:-0.148px;color:#6b6b6b;">Název dokumentu</span>
<span class="t" style="left:585.80px;top:92.30px;font-size:13px;line-height:17px;letter-spacing:-0.095px;color:#6b6b6b;">Antivirová kontrola</span>
<div class="drop"></div>
<svg class="i" style="left:405.50px;top:144.50px" width="33" height="32.4" viewBox="0 0 33 32.4" ><path d="M21 8.6A10.4 10.4 0 1 0 9.9 21" fill="none" stroke="#585858" stroke-width="1.35" stroke-linecap="round" stroke-linejoin="round"/><path d="M21.2 9.3A6.8 6.8 0 1 1 24.4 21.3" fill="none" stroke="#585858" stroke-width="1.35" stroke-linecap="round" stroke-linejoin="round"/><path d="M17.2 31.6V18.4M11.8 24.4 17.2 18.2 22.7 24.4" fill="none" stroke="#585858" stroke-width="1.35" stroke-linecap="butt" stroke-linejoin="miter"/></svg>
<strong class="t" style="left:448.10px;top:145.20px;font-size:13px;line-height:17px;font-weight:700;letter-spacing:-0.286px;color:#111;transform:scaleX(0.9816);transform-origin:0 0;">Místo pro vaše dokumenty</strong>
<span class="t" style="left:448.30px;top:163.80px;font-size:13px;line-height:17px;color:#707070;">Dokumenty sem můžete přetáhnout nebo nahrát pomoci tlačítka Nový</span>
</section>
<section class="panel" style="top:543px;height:334px">
<h2 class="t" style="left:12.30px;top:13.86px;font-size:18px;line-height:23px;font-weight:700;letter-spacing:-0.396px;color:#343c4a;transform:scaleX(0.9655);transform-origin:0 0;">Text zprávy</h2>
<div class="rule"></div>
<span class="t" style="left:216.50px;top:63.70px;font-size:15px;line-height:20px;color:#d2453e;">*</span>
<label class="t" style="left:224.30px;top:64.30px;font-size:13px;line-height:17px;letter-spacing:-0.172px;color:#666666;">Text zprávy:</label>
<div class="ed">
<div class="hr"></div>
<div class="vs" style="left:75.1px;top:8px;height:20px"></div>
<div class="vs" style="left:218.9px;top:8px;height:20px"></div>
<div class="vs" style="left:261.1px;top:8px;height:20px"></div>
<div class="vs" style="left:507.2px;top:36.5px;height:30px"></div>
<svg class="i" style="left:11.90px;top:8.90px" width="16.4" height="17" viewBox="0 0 16.4 17" ><path d="M6.4 .7 1.4 6.3 6.4 11.9M1.6 6.3H10.2C13.6 6.3 15.2 8.8 15.2 11.6C15.2 13.6 14.2 15.3 12.6 16.3" fill="none" stroke="#a0a0a0" stroke-width="2.0" stroke-linecap="butt" stroke-linejoin="miter"/></svg>
<svg class="i" style="left:47.80px;top:8.90px" width="16.4" height="17" viewBox="0 0 16.4 17" ><path d="M10 .7 15 6.3 10 11.9M14.8 6.3H6.2C2.8 6.3 1.2 8.8 1.2 11.6C1.2 13.6 2.2 15.3 3.8 16.3" fill="none" stroke="#a0a0a0" stroke-width="2.0" stroke-linecap="butt" stroke-linejoin="miter"/></svg>
<svg class="i" style="left:232.00px;top:9.00px" width="18" height="18" viewBox="0 0 18 18" ><path d="M7.6 4.6 10.6 1.8C12 .5 14.4 .5 15.8 1.9S17.2 5.6 15.8 7L12.8 10C11.4 11.4 9.2 11.4 7.8 10" fill="none" stroke="#1f72b3" stroke-width="1.8" stroke-linecap="round" stroke-linejoin="round"/><path d="M10.4 13 7.4 15.8C6 17.1 3.6 17.1 2.2 15.7S.8 12 2.2 10.6L5.2 7.6C6.6 6.2 8.8 6.2 10.2 7.6" fill="none" stroke="#1f72b3" stroke-width="1.8" stroke-linecap="round" stroke-linejoin="round"/></svg>
<svg class="i" style="left:275.00px;top:10.00px" width="16.2" height="16.2" viewBox="0 0 16.2 16.2" ><path d="M0.3 0.3L5.5 0.3L0.3 5.5Z" fill="#1f72b3"/><path d="M1.5 1.5L5.8999999999999995 5.8999999999999995" stroke="#1f72b3" stroke-width="1.8" fill="none"/><path d="M15.9 0.3L10.7 0.3L15.9 5.5Z" fill="#1f72b3"/><path d="M14.700000000000001 1.5L10.3 5.8999999999999995" stroke="#1f72b3" stroke-width="1.8" fill="none"/><path d="M0.3 15.9L5.5 15.9L0.3 10.7Z" fill="#1f72b3"/><path d="M1.5 14.700000000000001L5.8999999999999995 10.3" stroke="#1f72b3" stroke-width="1.8" fill="none"/><path d="M15.9 15.9L10.7 15.9L15.9 10.7Z" fill="#1f72b3"/><path d="M14.700000000000001 14.700000000000001L10.3 10.3" stroke="#1f72b3" stroke-width="1.8" fill="none"/></svg>
<div class="sel" style="left:4px"></div>
<div class="sel" style="left:138px"></div>
<div class="sel" style="left:272px"></div>
<svg class="i" style="left:117.00px;top:49.00px" width="10.4" height="6.6" viewBox="0 0 10.4 6.6" ><path d="M1 1 5.2 5.2 9.4 1" fill="none" stroke="#1f72b3" stroke-width="1.8" stroke-linecap="round" stroke-linejoin="miter"/></svg>
<svg class="i" style="left:251.00px;top:49.00px" width="10.4" height="6.6" viewBox="0 0 10.4 6.6" ><path d="M1 1 5.2 5.2 9.4 1" fill="none" stroke="#1f72b3" stroke-width="1.8" stroke-linecap="round" stroke-linejoin="miter"/></svg>
<svg class="i" style="left:384.50px;top:49.00px" width="10.4" height="6.6" viewBox="0 0 10.4 6.6" ><path d="M1 1 5.2 5.2 9.4 1" fill="none" stroke="#1f72b3" stroke-width="1.8" stroke-linecap="round" stroke-linejoin="miter"/></svg>
<svg class="i" style="left:439.20px;top:49.00px" width="10.4" height="6.6" viewBox="0 0 10.4 6.6" ><path d="M1 1 5.2 5.2 9.4 1" fill="none" stroke="#1f72b3" stroke-width="1.8" stroke-linecap="round" stroke-linejoin="miter"/></svg>
<svg class="i" style="left:490.00px;top:49.00px" width="10.4" height="6.6" viewBox="0 0 10.4 6.6" ><path d="M1 1 5.2 5.2 9.4 1" fill="none" stroke="#1f72b3" stroke-width="1.8" stroke-linecap="round" stroke-linejoin="miter"/></svg>
<div class="abs" style="left:410.2px;top:57.8px;width:17.8px;height:3.2px;background:#000"></div>
<div class="abs" style="left:461.3px;top:57.8px;width:17.8px;height:3.2px;background:#000"></div>
<svg class="i" style="left:461.00px;top:43.50px" width="17" height="14.5" viewBox="0 0 17 14.5" ><g transform="translate(12.7 3.5) rotate(45)" fill="#1f72b3"><rect x="-3" y="-2.2" width="6" height="5.4" rx="1.7"/><path d="M-3 4H3V10.4L1.2 13H-1.2L-3 16Z"/></g></svg>
<svg class="i" style="left:520.60px;top:45.00px" width="16" height="14" viewBox="0 0 16 14" ><rect x="0" y="0" width="16" height="2" rx=".3" fill="#1f72b3"/><rect x="0" y="4" width="10" height="2" rx=".3" fill="#1f72b3"/><rect x="0" y="8" width="16" height="2" rx=".3" fill="#1f72b3"/><rect x="0" y="12" width="10" height="2" rx=".3" fill="#1f72b3"/></svg>
<svg class="i" style="left:555.00px;top:45.00px" width="16" height="14" viewBox="0 0 16 14" ><rect x="0" y="0" width="16" height="2" rx=".3" fill="#1f72b3"/><rect x="3" y="4" width="10" height="2" rx=".3" fill="#1f72b3"/><rect x="0" y="8" width="16" height="2" rx=".3" fill="#1f72b3"/><rect x="3" y="12" width="10" height="2" rx=".3" fill="#1f72b3"/></svg>
<svg class="i" style="left:588.80px;top:45.00px" width="16" height="14" viewBox="0 0 16 14" ><rect x="0" y="0" width="16" height="2" rx=".3" fill="#1f72b3"/><rect x="6" y="4" width="10" height="2" rx=".3" fill="#1f72b3"/><rect x="0" y="8" width="16" height="2" rx=".3" fill="#1f72b3"/><rect x="6" y="12" width="10" height="2" rx=".3" fill="#1f72b3"/></svg>
<svg class="i" style="left:622.80px;top:45.00px" width="16" height="14" viewBox="0 0 16 14" ><rect x="0" y="0" width="16" height="2" rx=".3" fill="#1f72b3"/><rect x="0" y="4" width="16" height="2" rx=".3" fill="#1f72b3"/><rect x="0" y="8" width="16" height="2" rx=".3" fill="#1f72b3"/><rect x="0" y="12" width="16" height="2" rx=".3" fill="#1f72b3"/></svg>
<div class="area"></div><div class="st"></div>
<svg class="i" style="left:670.00px;top:229.00px" width="16.4" height="16" viewBox="0 0 16.4 16" ><path d="M4.4 1.6 12.2 .3C14.2 0 15.9 1.5 15.8 3.5L15.4 11.4C15.3 12.9 14.2 14.1 12.8 14.4L4.6 15.8C2.6 16.1 .9 14.6 1 12.6L1.4 4.6C1.5 3.1 2.6 1.9 4.4 1.6Z" fill="#47536a"/><path d="M6.2 5.2 11.6 4.4 11.2 10.8 5.8 11.6Z" fill="#fff"/><path d="M7.4 6.6 10.2 6.2 10 9.4 7.2 9.8Z" fill="#47536a"/><path d="M4.2 10.4 6.4 10.2 6.2 12.6 4 12.8Z" fill="#fff" opacity=".0"/></svg>
<b class="t" style="left:91.20px;top:5.44px;font-size:19.5px;line-height:25px;color:#1f72b3;-webkit-text-stroke:0.75px;transform:scaleX(0.9094);transform-origin:0 0;">B</b>
<i class="t" style="left:127.01px;top:5.45px;font-size:19.5px;line-height:25px;font-weight:i;color:#1f72b3;font-family:'Liberation Serif',sans-serif;-webkit-text-stroke:0.3px;transform:scaleX(1.1327);transform-origin:0 0;font-style:italic;font-weight:400;font-family:'Liberation Serif',serif;">I</i>
<u class="t" style="left:159.80px;top:6.10px;font-size:15px;line-height:20px;color:#1f72b3;-webkit-text-stroke:0.9px;transform:scaleX(0.9342);transform-origin:0 0;text-decoration:none;">U</u>
<div class="abs" style="left:160.1px;top:23.0px;width:10.1px;height:2px;background:#1f72b3"></div>
<s class="t" style="left:194.30px;top:5.07px;font-size:20px;line-height:26px;color:#1f72b3;-webkit-text-stroke:0.6px;transform:scaleX(0.6916);transform-origin:0 0;text-decoration:none;">S</s>
<div class="abs" style="left:193.0px;top:15.9px;width:12px;height:3.6px;background:#fff"></div>
<div class="abs" style="left:190.9px;top:16.8px;width:16px;height:2px;background:#1f72b3"></div>
<span class="t" style="left:414.10px;top:41.58px;font-size:14.5px;line-height:19px;color:#1f72b3;-webkit-text-stroke:0.8px;transform:scaleX(0.9161);transform-origin:0 0;">A</span>
<span class="t" style="left:12.30px;top:43.45px;font-size:14px;line-height:18px;letter-spacing:-0.108px;color:#222f3e;">Roboto</span>
<span class="t" style="left:146.70px;top:43.45px;font-size:14px;line-height:18px;letter-spacing:0.006px;color:#222f3e;">10pt</span>
<span class="t" style="left:280.30px;top:43.45px;font-size:14px;line-height:18px;letter-spacing:-0.308px;color:#222f3e;transform:scaleX(0.9968);transform-origin:0 0;">Odstavec</span>
<span class="t" style="left:688.70px;top:224.66px;font-size:18px;line-height:23px;font-weight:700;letter-spacing:-0.396px;color:#47536a;transform:scaleX(0.9900);transform-origin:0 0;">tiny</span>
</div>
</section>
<section class="panel" style="top:887px;height:135px">
<h2 class="t" style="left:12.30px;top:13.86px;font-size:18px;line-height:23px;font-weight:700;letter-spacing:-0.396px;color:#343c4a;transform:scaleX(0.9611);transform-origin:0 0;">Další informace</h2>
<div class="rule"></div>
<svg class="i" style="left:1215.50px;top:20.00px" width="20" height="11.6" viewBox="0 0 20 11.6" ><path d="M1.4 10.2 10 1.6 18.6 10.2" fill="none" stroke="#1f72b3" stroke-width="2.2" stroke-linecap="round" stroke-linejoin="miter"/></svg>
<div class="chk" style="left:448px;top:64px"><svg class="i" style="left:3.5px;top:3.5px" width="9" height="9" viewBox="0 0 9 9"><path d="M1.2 1.2 7.8 7.8M7.8 1.2 1.2 7.8" fill="none" stroke="#fff" stroke-width="2.5" stroke-linecap="butt"/></svg></div>
<span class="t" style="left:467.90px;top:64.20px;font-size:15px;line-height:20px;color:#d2453e;">*</span>
<label class="t" style="left:476.20px;top:63.80px;font-size:13px;line-height:17px;letter-spacing:-0.160px;color:#666666;">Zpětvzato</label>
<label class="t" style="left:385.00px;top:99.20px;font-size:13px;line-height:17px;letter-spacing:-0.196px;color:#666666;">Vyřízeno:</label>
<strong class="t" style="left:448.40px;top:99.20px;font-size:13px;line-height:17px;letter-spacing:-0.286px;color:#000;-webkit-text-stroke:0.4px;transform:scaleX(0.9557);transform-origin:0 0;">Ne</strong>
</section>
<section class="panel" style="top:1032px;height:120px">
<h2 class="t" style="left:12.30px;top:13.86px;font-size:18px;line-height:23px;font-weight:700;letter-spacing:-0.396px;color:#343c4a;transform:scaleX(0.9391);transform-origin:0 0;">Doprovodné údaje</h2>
<div class="rule"></div>
<svg class="i" style="left:1215.50px;top:20.00px" width="20" height="11.6" viewBox="0 0 20 11.6" ><path d="M1.4 10.2 10 1.6 18.6 10.2" fill="none" stroke="#1f72b3" stroke-width="2.2" stroke-linecap="round" stroke-linejoin="miter"/></svg>
<div class="chk" style="left:448px;top:64px"><svg class="i" style="left:3.5px;top:3.5px" width="9" height="9" viewBox="0 0 9 9"><path d="M1.2 1.2 7.8 7.8M7.8 1.2 1.2 7.8" fill="none" stroke="#fff" stroke-width="2.5" stroke-linecap="butt"/></svg></div>
<span class="t" style="left:467.90px;top:63.40px;font-size:15px;line-height:20px;color:#d2453e;">*</span>
<label class="t" style="left:476.20px;top:64.40px;font-size:13px;line-height:17px;letter-spacing:-0.131px;color:#666666;">Zpřístupnit číslo spisu a číslo jednací adresátům</label>
</section>
</div>
<div class="thumb"></div>
</main>
</div>
</body>
</html>
